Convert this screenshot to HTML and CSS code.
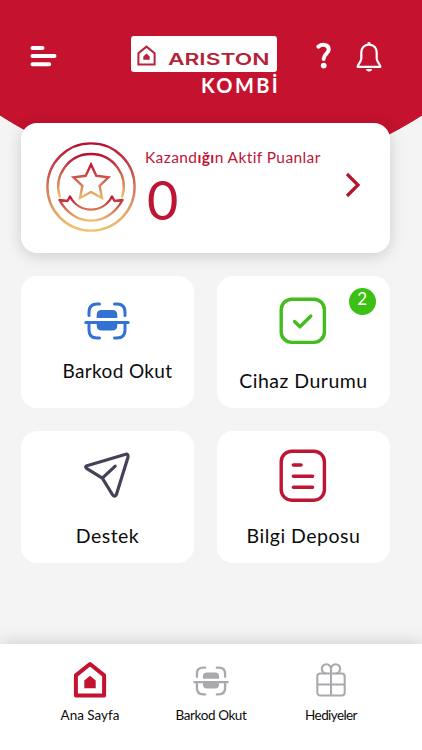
FILE: index.html
```html
<!DOCTYPE html>
<html lang="tr">
<head>
  <title>Ariston Kombi</title>
  <meta charset="UTF-8">
  <meta name="viewport" content="width=device-width, initial-scale=1">
  <link rel="stylesheet" href="styles.css">
</head>
<body>
  <header class="topbar">
    <button class="icon-btn menu-btn" title="Menü">
      <svg width="28" height="22" viewBox="0 0 28 22" stroke="#fff" stroke-width="4" stroke-linecap="round">
        <path d="M2.5 3H12.5M2.5 11.1H24.5M2.5 19.2H19.2"/>
      </svg>
    </button>
    <div class="logo">
      <div class="logo-box">
        <svg width="19" height="21" viewBox="0 0 19 21">
          <path d="M1.4 19.4V8.2L9.5 1.6L17.6 8.2V19.4Z" fill="none" stroke="#b5233a" stroke-width="2"/>
          <path d="M6.3 14.8V11.4L9.5 8.6L12.7 11.4V14.8Z" fill="#b5233a"/>
        </svg>
        <span class="logo-name">ARISTON</span>
      </div>
      <div class="logo-sub">KOMBİ</div>
    </div>
    <button class="icon-btn help-btn" title="Yardım">
      <svg width="16" height="28" viewBox="0 0 16 28">
        <path d="M2.4 4.6C5.5 2.2 12.7 1.6 12.7 7.4C12.7 11.7 7.9 11.6 7.6 17" fill="none" stroke="#fff" stroke-width="4" stroke-linecap="round"/>
        <circle cx="7.7" cy="23.6" r="2.9" fill="#fff"/>
      </svg>
    </button>
    <button class="icon-btn bell-btn" title="Bildirimler">
      <svg width="28" height="32" viewBox="0 0 28 32" fill="none" stroke="#fff" stroke-width="2.2" stroke-linejoin="round">
        <path d="M14 3.6C8.9 3.6 6.3 7.3 6.3 11.5V17.5C6.3 21.2 2.6 23.1 2.6 25.8H25.4C25.4 23.1 21.7 21.2 21.7 17.5V11.5C21.7 7.3 19.1 3.6 14 3.6Z"/>
        <path d="M12.2 2.7A1.8 1.8 0 0 1 15.8 2.7Z" fill="#fff" stroke="none"/>
        <path d="M11 28H17A3 2.4 0 0 1 11 28Z" fill="#fff" stroke="none"/>
      </svg>
    </button>
  </header>

  <main class="content">
    <section class="points-card">
      <svg class="medal" width="92" height="92" viewBox="0 0 92 92" fill="none" stroke="url(#medalGradient)" stroke-width="2.4" stroke-linejoin="round" stroke-linecap="round">
        <defs>
          <linearGradient id="medalGradient" gradientUnits="userSpaceOnUse" x1="0" y1="2" x2="0" y2="90">
            <stop offset="0" stop-color="#b80f30"/>
            <stop offset="0.5" stop-color="#d5735c"/>
            <stop offset="1" stop-color="#efc66f"/>
          </linearGradient>
          <linearGradient id="starGradient" gradientUnits="userSpaceOnUse" x1="0" y1="22" x2="0" y2="58">
            <stop offset="0" stop-color="#b80f30"/>
            <stop offset="1" stop-color="#efc070"/>
          </linearGradient>
          <linearGradient id="ringGradient" gradientUnits="userSpaceOnUse" x1="0" y1="13" x2="0" y2="56">
            <stop offset="0" stop-color="#b80f30"/>
            <stop offset="1" stop-color="#efc070"/>
          </linearGradient>
          <linearGradient id="ribbonGradient" gradientUnits="userSpaceOnUse" x1="0" y1="54" x2="0" y2="80">
            <stop offset="0" stop-color="#b80f30"/>
            <stop offset="1" stop-color="#efc070"/>
          </linearGradient>
        </defs>
        <circle cx="46" cy="46" r="43.6"/>
        <path stroke="url(#ringGradient)" d="M14.8 55.5A32.7 32.7 0 1 1 77.2 55.5"/>
        <path stroke="url(#starGradient)" stroke-linejoin="miter" d="M46 23.5L51.3 34.8L63.5 36.3L54.6 44.8L57 57L46 51L35 57L37.4 44.8L28.5 36.3L40.7 34.8Z"/>
        <path stroke="url(#ribbonGradient)" d="M25 55.5C34 73 58 73 67 55.5L69.5 60L77.5 59C63 86.5 29 86.5 14.5 59L22.5 60Z"/>
      </svg>
      <div class="points-info">
        <div class="points-label">Kazand<b>ığı</b>n Aktif Puanlar</div>
        <div class="points-value">0</div>
      </div>
      <svg class="chevron" width="18" height="26" viewBox="0 0 18 26" fill="none" stroke="#b4152f" stroke-width="3.2">
        <path d="M3 2L14 13L3 24"/>
      </svg>
    </section>

    <section class="menu-grid">
      <a class="tile tile-scan">
        <svg width="46" height="40" viewBox="0 0 46 40">
          <g fill="none" stroke="#3272d2" stroke-width="3" stroke-linecap="round">
            <path d="M5 14.5V11Q5 3 13 3H15.5M30.5 3H33Q41 3 41 11V14.5"/>
            <path d="M5 21.5V29Q5 37 13 37H15.5M30.5 37H33Q41 37 41 29V21.5M1.8 21.5H44.2"/>
          </g>
          <path d="M12.7 17V14Q12.7 9 17.7 9H28.3Q33.3 9 33.3 14V17ZM12.7 22V24.5Q12.7 29.5 17.7 29.5H28.3Q33.3 29.5 33.3 24.5V22Z" fill="#3272d2"/>
        </svg>
        <span>Barkod Okut</span>
      </a>
      <a class="tile tile-status">
        <svg width="48" height="48" viewBox="0 0 48 48" fill="none" stroke="#43bd1d" stroke-width="3.4" stroke-linecap="round" stroke-linejoin="round">
          <rect x="2.2" y="2.2" width="43.2" height="43.2" rx="10.5"/>
          <path d="M15.5 24.5L21 29.8L31.8 19"/>
        </svg>
        <span>Cihaz Durumu</span>
        <em class="badge">2</em>
      </a>
      <a class="tile tile-support">
        <svg width="48" height="48" viewBox="0 0 48 48" fill="none" stroke="#484058" stroke-width="3.2" stroke-linecap="round" stroke-linejoin="round">
          <path d="M42.8 2.2L4 13.7Q1.5 14.7 3.5 16.4L19.3 26.2L29.7 43Q31.8 45.6 33.4 42.5L45 5.2Q45.4 1.6 42.8 2.2ZM19.3 26.2L32.2 14.1"/>
        </svg>
        <span>Destek</span>
      </a>
      <a class="tile tile-info">
        <svg width="48" height="54" viewBox="0 0 48 54" fill="none" stroke="#bd1533" stroke-width="3.4" stroke-linecap="round">
          <rect x="2.2" y="2.2" width="43.2" height="49" rx="10.5"/>
          <path d="M14.4 16H22M14.4 27.2H33.5M14.4 38.2H33.5" stroke-width="3.6"/>
        </svg>
        <span>Bilgi Deposu</span>
      </a>
    </section>
  </main>

  <nav class="bottom-nav">
    <a class="nav-item">
      <svg width="34" height="38" viewBox="0 0 34 38">
        <path d="M2.9 34.4V14.4L17 3L31.1 14.4V34.4Z" fill="none" stroke="#c4122f" stroke-width="4" stroke-linejoin="round"/>
        <path d="M11.3 27.2V19.5L17 14.7L22.7 19.5V27.2Z" fill="#c4122f"/>
      </svg>
      <span>Ana Sayfa</span>
    </a>
    <a class="nav-item nav-scan">
      <svg width="36" height="32" viewBox="0 0 46 40">
        <g fill="none" stroke="#aaaaae" stroke-width="3" stroke-linecap="round">
          <path d="M5 14.5V11Q5 3 13 3H15.5M30.5 3H33Q41 3 41 11V14.5"/>
          <path d="M5 21.5V29Q5 37 13 37H15.5M30.5 37H33Q41 37 41 29V21.5M1.8 21.5H44.2"/>
        </g>
        <path d="M12.7 17V14Q12.7 9 17.7 9H28.3Q33.3 9 33.3 14V17ZM12.7 22V24.5Q12.7 29.5 17.7 29.5H28.3Q33.3 29.5 33.3 24.5V22Z" fill="#aaaaae"/>
      </svg>
      <span>Barkod Okut</span>
    </a>
    <a class="nav-item nav-gifts">
      <svg width="30" height="34" viewBox="0 0 30 34" fill="none" stroke="#aaaaae" stroke-width="2.1">
        <rect x="1.3" y="10.5" width="27.4" height="22" rx="3"/>
        <path d="M1.3 21.5H28.7M15 10.5V32.5M15 10.5V6A4.6 4.6 0 1 0 10.4 10.5M15 10.5V6A4.6 4.6 0 1 1 19.6 10.5"/>
      </svg>
      <span>Hediyeler</span>
    </a>
  </nav>
</body>
</html>
```

FILE: styles.css
```css
:root {
  --red: #c4122f;
  --bg: #f4f4f4;
}
* {
  box-sizing: border-box;
}
body {
  margin: 0;
  height: 750px;
  display: flex;
  flex-direction: column;
  overflow: hidden;
  font-family: Lato, sans-serif;
  color: #0c0c0c;
  background: radial-gradient(circle 390px at 211px -212px, var(--red) 99.8%, var(--bg) 100%);
}
.topbar {
  height: 123px;
  display: flex;
  align-items: flex-start;
  padding: 36px 39px 0 30px;
}
.icon-btn {
  border: none;
  background: none;
  padding: 0;
  line-height: 0;
}
.menu-btn {
  margin-top: 9px;
}
.logo {
  width: 147px;
  margin-left: 73px;
}
.logo-box {
  height: 36px;
  width: 146px;
  display: flex;
  padding: 9px 0 0 6px;
  border-radius: 3px;
  background: #fff;
}
.logo-name {
  font-family: Inter, sans-serif;
  font-size: 16px;
  font-weight: 600;
  line-height: 28px;
  margin-left: 12px;
  color: #b5233a;
  transform: scaleX(1.42);
  transform-origin: left;
}
.logo-sub {
  font-size: 20px;
  font-weight: 700;
  line-height: 26px;
  letter-spacing: 2.4px;
  margin-left: 70px;
  white-space: nowrap;
  color: #fff;
}
.help-btn {
  margin: 6px 0 0 38px;
}
.bell-btn {
  margin: 5px 0 0 auto;
}
.content {
  flex: 1;
  padding: 0 32px 0 21px;
}
.points-card {
  height: 130px;
  display: flex;
  border-radius: 16px;
  background: #fff;
  box-shadow: 0 3px 16px rgba(0, 0, 0, 0.16);
  color: #bd1533;
}
.medal {
  margin: 18px 0 0 24px;
}
.points-info {
  width: 174px;
  margin: 24px 0 0 8px;
}
.points-label {
  font-size: 15.5px;
  line-height: 20px;
  letter-spacing: 0.4px;
  white-space: nowrap;
}
.points-value {
  font-size: 54px;
  line-height: 66px;
  margin-left: 2px;
}
.chevron {
  margin: 49px 0 0 25px;
}
.menu-grid {
  display: grid;
  grid-template-columns: 173px 173px;
  gap: 23px;
  margin-top: 23px;
}
.tile {
  position: relative;
  height: 132px;
  display: flex;
  flex-direction: column;
  align-items: center;
  border-radius: 16px;
  background: #fff;
  font-size: 19.5px;
  line-height: 26px;
  letter-spacing: 0.5px;
}
.tile svg {
  margin-left: -1px;
}
.tile span {
  margin-top: auto;
  margin-bottom: 14px;
  white-space: nowrap;
}
.tile-scan {
  padding-top: 25px;
}
.tile-scan span {
  font-size: 19px;
  letter-spacing: 0.35px;
  margin-left: 20px;
  margin-bottom: 24px;
}
.tile-status {
  padding-top: 21px;
}
.tile-support {
  padding-top: 21px;
}
.tile-info {
  padding-top: 18px;
}
.badge {
  position: absolute;
  top: 12px;
  right: 14px;
  width: 27px;
  height: 27px;
  border-radius: 50%;
  background: #3cc013;
  color: #fff;
  font-size: 17px;
  font-style: normal;
  font-weight: 400;
  line-height: 22px;
  text-align: center;
}
.bottom-nav {
  height: 106px;
  display: flex;
  padding: 0 31px 0 30px;
  background: #fff;
  box-shadow: 0 -2px 16px rgba(0, 0, 0, 0.14);
}
.nav-item {
  flex: 1;
  height: 80px;
  display: flex;
  flex-direction: column;
  align-items: center;
  padding-top: 17px;
  font-size: 13.5px;
  line-height: 18px;
}
.nav-item span {
  margin-top: auto;
}
.nav-scan {
  padding-top: 21px;
  padding-left: 1px;
  letter-spacing: -0.4px;
}
.nav-gifts {
  padding-top: 19px;
  letter-spacing: -0.6px;
}
```
